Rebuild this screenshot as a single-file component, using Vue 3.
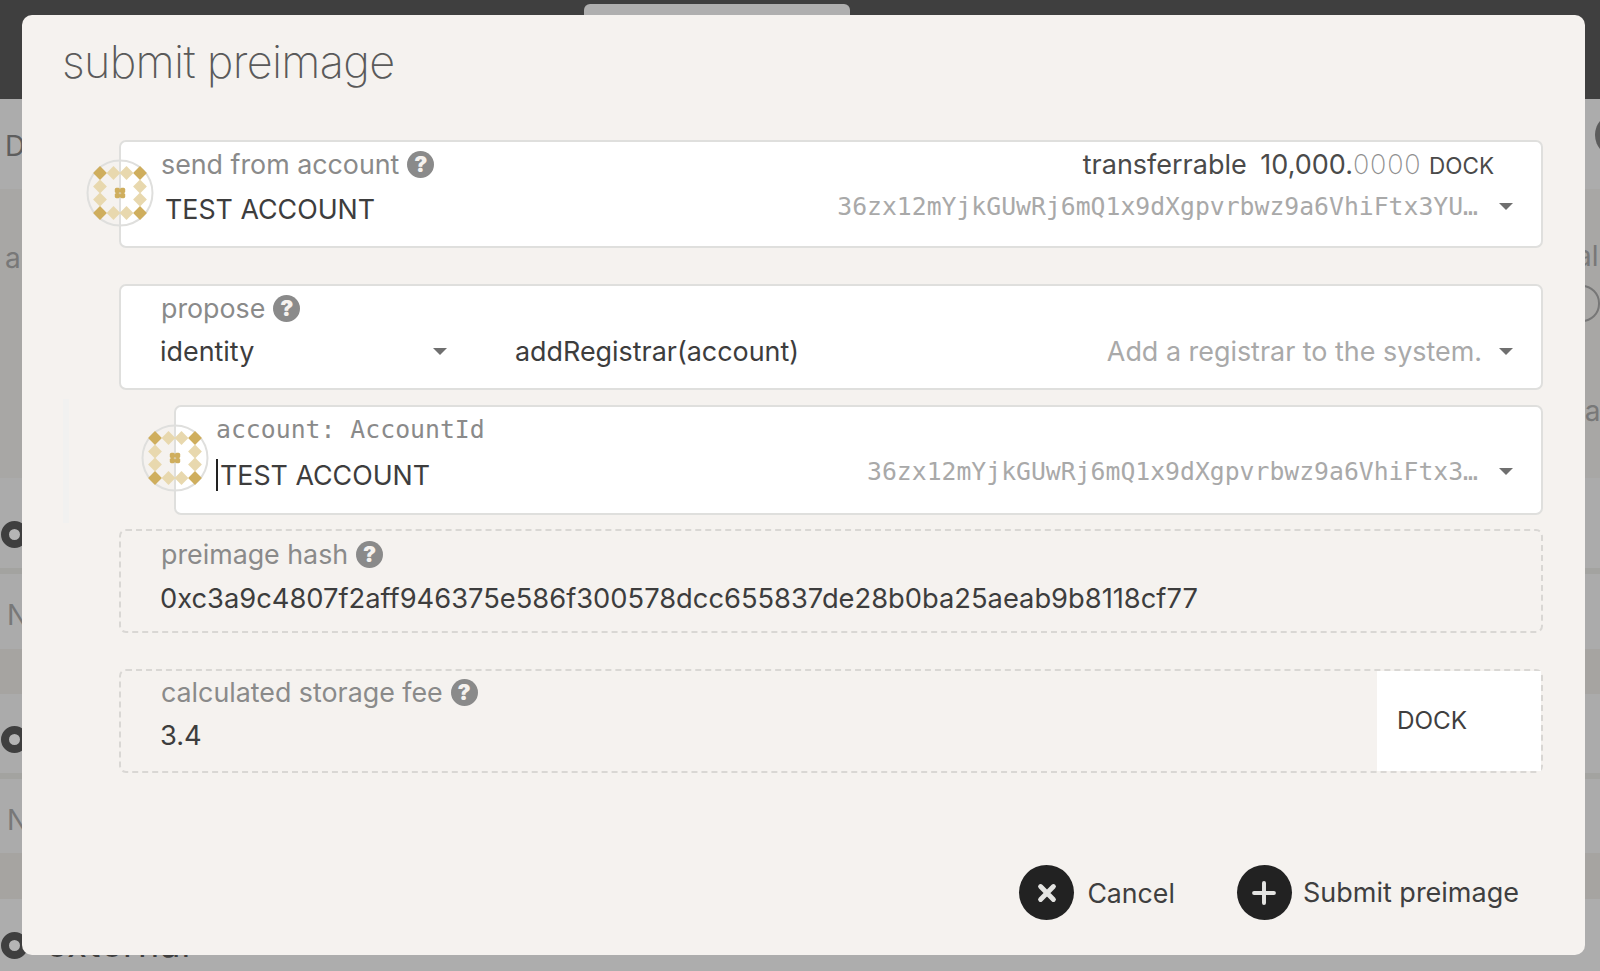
<script setup>
const sideRows = [
  { h: 90, c: '#acacac' },
  { h: 289, c: '#a8a7a5' },
  { h: 90, c: '#ababab' },
  { h: 6, c: '#a3a3a0' },
  { h: 75, c: '#ababab' },
  { h: 45, c: '#a6a4a1' },
  { h: 79, c: '#ababab' },
  { h: 6, c: '#a3a3a0' },
  { h: 74, c: '#ababab' },
  { h: 46, c: '#a6a4a1' },
  { h: 72, c: '#adadad' },
]

const centres = [14, 27.5, 40.5, 54]
const diamonds = [
  { x: 0, y: 0, strong: true }, { x: 1, y: 0 }, { x: 2, y: 0 }, { x: 3, y: 0, strong: true },
  { x: 0, y: 1 }, { x: 3, y: 1 },
  { x: 0, y: 2 }, { x: 3, y: 2 },
  { x: 0, y: 3, strong: true }, { x: 1, y: 3 }, { x: 2, y: 3 }, { x: 3, y: 3, strong: true },
]

const diamondPoints = (d) => {
  const cx = centres[d.x]
  const cy = centres[d.y]
  const r = 6.9
  return `${cx},${cy - r} ${cx + r},${cy} ${cx},${cy + r} ${cx - r},${cy}`
}

const clover = [[28.8, 28.8], [34, 28.8], [28.8, 34], [34, 34]]
</script>

<template>
  <div class="page">
    <header class="top">
      <div class="tab"></div>
    </header>
    <div class="rows">
      <div v-for="(row, i) in sideRows" :key="i" :style="{ height: row.h + 'px', background: row.c }"></div>
    </div>

    <span class="peek dot d1"></span>
    <span class="peek dot d2"></span>
    <span class="peek dot d3"></span>
    <span class="peek letter strong l1">D</span>
    <span class="peek letter l2">a</span>
    <span class="peek letter l3">N</span>
    <span class="peek letter l4">N</span>
    <span class="peek under">external</span>
    <span class="peek letter r1">al</span>
    <span class="peek letter r2">sa</span>
    <span class="peek round-end"></span>
    <span class="peek side-circle"></span>

    <main class="modal">
      <h1 class="title">submit preimage</h1>

      <section class="field solid first">
        <svg class="avatar" viewBox="0 0 68 68">
          <circle cx="34" cy="34" r="32.5" fill="none" stroke="#dfdfdd" stroke-width="2" />
          <polygon
            v-for="(d, i) in diamonds"
            :key="i"
            :points="diamondPoints(d)"
            :fill="d.strong ? '#cfae5d' : '#e8d8ae'"
          />
          <rect v-for="(c, i) in clover" :key="i" :x="c[0]" :y="c[1]" width="5.2" height="5.2" rx="1.6" fill="#cfae5d" />
        </svg>
        <div class="line">
          <span class="label">send from account <i class="help">?</i></span>
          <span class="balance">transferrable <b>10,000.<em>0000</em></b> <small>DOCK</small></span>
        </div>
        <div class="line value-line">
          <span class="name">TEST ACCOUNT</span>
          <span class="address">36zx12mYjkGUwRj6mQ1x9dXgpvrbwz9a6VhiFtx3YU…</span>
          <span class="caret raised"></span>
        </div>
      </section>

      <section class="field solid second">
        <div class="line">
          <span class="label">propose <i class="help">?</i></span>
        </div>
        <div class="line value-line propose">
          <span class="module">identity<span class="caret"></span></span>
          <span class="method">addRegistrar(account)</span>
          <span class="hint">Add a registrar to the system.</span>
          <span class="caret"></span>
        </div>
      </section>

      <div class="param">
        <section class="field solid third">
          <svg class="avatar" viewBox="0 0 68 68">
            <circle cx="34" cy="34" r="32.5" fill="none" stroke="#dfdfdd" stroke-width="2" />
            <polygon
              v-for="(d, i) in diamonds"
              :key="i"
              :points="diamondPoints(d)"
              :fill="d.strong ? '#cfae5d' : '#e8d8ae'"
            />
            <rect v-for="(c, i) in clover" :key="i" :x="c[0]" :y="c[1]" width="5.2" height="5.2" rx="1.6" fill="#cfae5d" />
          </svg>
          <div class="line">
            <span class="label mono">account: AccountId</span>
          </div>
          <div class="line value-line">
            <span class="name typed">TEST ACCOUNT</span>
            <span class="address">36zx12mYjkGUwRj6mQ1x9dXgpvrbwz9a6VhiFtx3…</span>
            <span class="caret raised"></span>
          </div>
        </section>
      </div>

      <section class="field dashed hash">
        <div class="line">
          <span class="label">preimage hash <i class="help">?</i></span>
        </div>
        <div class="line value-line plain">0xc3a9c4807f2aff946375e586f300578dcc655837de28b0ba25aeab9b8118cf77</div>
      </section>

      <section class="field dashed fee">
        <div class="fee-main">
          <div class="line">
            <span class="label">calculated storage fee <i class="help">?</i></span>
          </div>
          <div class="line value-line plain tight">3.4</div>
        </div>
        <div class="unit">DOCK</div>
      </section>

      <footer class="actions">
        <button class="btn cancel">
          <span class="round">
            <svg viewBox="0 0 24 24"><path d="M6.5 6.5l11 11M17.5 6.5l-11 11" stroke="#e4e4e2" stroke-width="4.2" stroke-linecap="round" /></svg>
          </span>
          Cancel
        </button>
        <button class="btn submit">
          <span class="round">
            <svg viewBox="0 0 24 24"><path d="M12 3.5v17M3.5 12h17" stroke="#e4e4e2" stroke-width="3.4" stroke-linecap="round" /></svg>
          </span>
          Submit preimage
        </button>
      </footer>
    </main>
  </div>
</template>

<style>
html, body {
  margin: 0;
  background: #adadad;
  overflow: hidden;
}
</style>

<style scoped>
.page {
  position: relative;
  height: 971px;
  overflow: hidden;
  font-family: Inter, "Noto Sans", sans-serif;
  color: #3d3d3d;
}

.top {
  height: 99px;
  background: #3f3f3f;
  padding-left: 584px;
  box-sizing: border-box;
}

.tab {
  width: 266px;
  height: 11px;
  margin-top: 4px;
  border-radius: 6px 6px 0 0;
  background: #afafaf;
  position: absolute;
}

.peek {
  position: absolute;
}

.dot {
  left: 1px;
  width: 11px;
  height: 11px;
  border: 8px solid #3f3f3f;
  border-radius: 50%;
  background: #b5b5b5;
}

.d1 { top: 521px; }
.d2 { top: 726px; }
.d3 { top: 932px; }

.letter {
  font-size: 28px;
  color: #787878;
}

.strong {
  color: #5e5e5e;
}

.l1 { left: 5px; top: 129px; }
.l2 { left: 5px; top: 241px; }
.l3 { left: 7px; top: 598px; }
.l4 { left: 7px; top: 803px; }
.r1 { left: 1576px; top: 239px; }
.r2 { left: 1570px; top: 394px; }

.under {
  left: 46px;
  top: 922px;
  font-size: 36px;
  letter-spacing: 1px;
  color: #3f3f3f;
}

.round-end {
  left: 1550px;
  top: 285px;
  width: 46px;
  height: 33px;
  border: 2px solid #777;
  border-radius: 0 18px 18px 0;
}

.side-circle {
  left: 1595px;
  top: 113px;
  width: 44px;
  height: 44px;
  border-radius: 50%;
  background: #5c5c5c;
}

.modal {
  position: absolute;
  left: 22px;
  top: 15px;
  width: 1563px;
  height: 940px;
  box-sizing: border-box;
  border-radius: 10px;
  background: #f5f2ef;
  padding: 0 42px 0 97px;
  display: flex;
  flex-direction: column;
}

.title {
  margin: 23px 0 0 -57px;
  height: 102px;
  font-size: 45px;
  line-height: 48px;
  font-weight: 200;
  letter-spacing: -0.7px;
  color: #5a5a5a;
}

.field {
  position: relative;
  box-sizing: border-box;
  border-radius: 7px;
  padding: 5px 28px 0 40px;
}

.solid {
  background: #fff;
  border: 2px solid #dfdfdd;
}

.dashed {
  border: 2px dashed #d9d7d4;
}

.first {
  height: 108px;
}

.second {
  height: 106px;
  margin-top: 36px;
}

.param {
  margin: 9px 0 6px -56px;
  padding: 6px 0 8px 105px;
  border-left: 6px solid #f1f1f0;
}

.third {
  height: 110px;
}

.hash {
  height: 104px;
  padding-top: 6px;
}

.fee {
  height: 104px;
  margin-top: 36px;
  display: flex;
  padding: 0;
}

.fee-main {
  flex: 1;
  padding: 4px 0 0 40px;
}

.unit {
  width: 164px;
  padding: 0 0 2px 20px;
  box-sizing: border-box;
  background: #fff;
  display: flex;
  align-items: center;
  font-size: 24.3px;
  color: #3f3f3f;
}

.avatar {
  position: absolute;
  left: -35px;
  top: 17px;
  width: 68px;
  height: 68px;
}

.line {
  display: flex;
  align-items: center;
  justify-content: space-between;
  height: 34px;
}

.label {
  font-size: 26.8px;
  color: #8a8a8a;
  display: flex;
  align-items: center;
  gap: 8px;
}

.label.mono {
  font-family: "DejaVu Sans Mono", monospace;
  font-size: 24.8px;
}

.help {
  width: 27px;
  height: 27px;
  border-radius: 50%;
  background: #8a8a8a;
  color: #f5f2ef;
  display: inline-flex;
  align-items: center;
  justify-content: center;
  font-style: normal;
  font-weight: 900;
  font-size: 22px;
}

.balance {
  font-size: 27px;
  color: #4a4a4a;
  white-space: pre;
  margin-right: 19px;
}

.balance b {
  font-weight: 400;
  margin-left: 6px;
}

.balance em {
  font-style: normal;
  font-weight: 200;
  letter-spacing: 0.8px;
  color: #8f8f8f;
}

.balance small {
  font-size: 22.5px;
  font-variant: small-caps;
}

.value-line {
  margin-top: 9px;
  height: 38px;
}

.name {
  font-size: 26.8px;
  color: #3d3d3d;
  margin-left: 4px;
}

.typed {
  margin-left: 0;
  padding-left: 2px;
  border-left: 2px solid #222;
  line-height: 32px;
}

.address {
  margin-left: auto;
  margin-bottom: 6px;
  font-family: "DejaVu Sans Mono", monospace;
  font-size: 24.75px;
  color: #a9a9a9;
  white-space: nowrap;
}

.third .value-line {
  margin-top: 10px;
}

.third .address {
  margin-right: 5px;
  margin-bottom: 8px;
}

.caret {
  flex: none;
  width: 0;
  height: 0;
  margin-left: 21px;
  border-left: 7px solid transparent;
  border-right: 7px solid transparent;
  border-top: 7px solid #6f6f6f;
}

.raised {
  margin-bottom: 5px;
}

.third .raised {
  margin-left: 16px;
  margin-bottom: 8px;
}

.propose {
  margin-top: 7px;
  margin-left: -1px;
  justify-content: flex-start;
  font-size: 26.9px;
}

.module {
  width: 287px;
  display: flex;
  align-items: center;
  justify-content: space-between;
  margin-right: 68px;
}

.method {
  color: #3d3d3d;
}

.hint {
  margin-left: auto;
  color: #a9a9a9;
}

.hint + .caret {
  margin-left: 17px;
}

.plain {
  font-size: 27.3px;
  margin-top: 8px;
  margin-left: -1px;
  color: #3d3d3d;
}

.tight {
  margin-top: 7px;
}

.actions {
  margin-top: 92px;
  display: flex;
  justify-content: flex-end;
  gap: 62px;
  margin-right: 24px;
}

.btn {
  display: flex;
  align-items: center;
  gap: 13px;
  padding: 0;
  border: 0;
  background: none;
  font: inherit;
  font-size: 27px;
  color: #3f3f3f;
}

.cancel {
  font-size: 26.7px;
}

.submit {
  gap: 11px;
}

.round {
  width: 55px;
  height: 55px;
  border-radius: 50%;
  background: #222;
  display: flex;
  align-items: center;
  justify-content: center;
}

.round svg {
  width: 28px;
  height: 28px;
}
</style>
